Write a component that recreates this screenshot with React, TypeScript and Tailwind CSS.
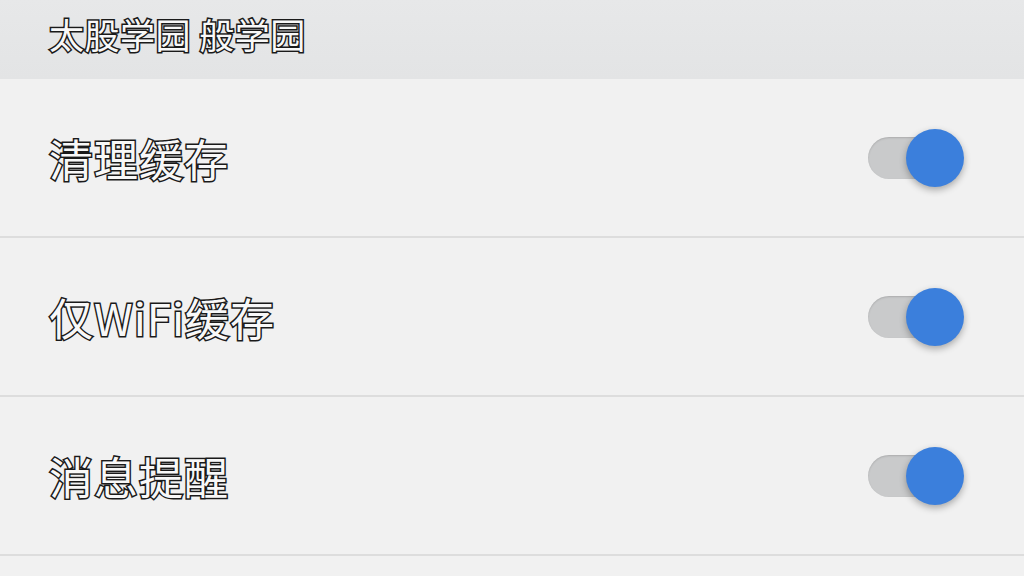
const rows = ["清理缓存", "仅WiFi缓存", "消息提醒"]

const outline =
  "font-normal text-[#f8f8f8] [-webkit-text-stroke:3px_#1a1a1a] [paint-order:stroke_fill] [font-family:'Noto_Sans_CJK_SC','Noto_Sans',sans-serif]"

const Toggle = () => (
  <div className="relative w-[96px] h-[58px] flex items-center">
    <div className="w-[72px] h-[42px] rounded-full bg-[#c9cacb] shadow-[inset_0_1px_2px_rgba(0,0,0,0.15)]" />
    <div className="absolute right-0 top-0 w-[58px] h-[58px] rounded-full bg-[#3b7fdc] shadow-[0_3px_7px_rgba(0,0,0,0.3)]" />
  </div>
)

export default function App() {
  return (
    <div className="w-[1024px] h-[576px] overflow-hidden bg-[#f1f1f1]">
      <div className="h-[79px] bg-gradient-to-b from-[#e7e8e9] to-[#e3e4e5] flex items-start pl-[49px] pt-[10px]">
        <span className={`text-[35px] leading-[48px] tracking-[0.5px] ${outline}`}>太股学园 般学园</span>
      </div>
      {rows.map((label) => (
        <div
          key={label}
          className="h-[159px] border-b-2 border-[#dddddd] flex items-center justify-between pl-[49px] pr-[60px]"
        >
          <span className={`text-[44px] leading-none tracking-[1px] ${outline}`}>{label}</span>
          <Toggle />
        </div>
      ))}
    </div>
  )
}
